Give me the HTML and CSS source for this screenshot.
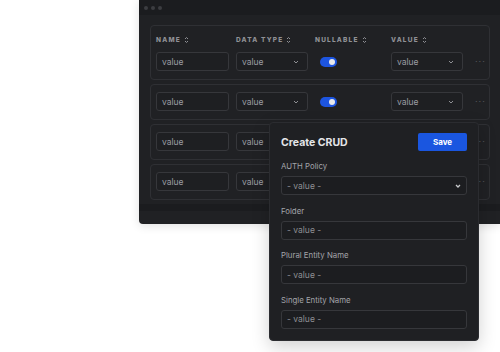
FILE: index.html
```html
<!DOCTYPE html>
<html lang="en">
<head>
  <meta charset="UTF-8">
  <meta name="viewport" content="width=device-width, initial-scale=1.0">
  <title>Create CRUD</title>
  <link rel="stylesheet" href="styles.css">
</head>
<body>
  <div class="window">
    <div class="titlebar">
      <span class="dot"></span><span class="dot"></span><span class="dot"></span>
    </div>

    <div class="window-body">
      <div class="card card-head">
        <div class="grid heads">
          <div class="th">NAME <svg class="sort" viewBox="0 0 5 8"><path d="M1 3l1.5-1.5L4 3M1 5l1.5 1.5L4 5"/></svg></div>
          <div class="th">DATA TYPE <svg class="sort" viewBox="0 0 5 8"><path d="M1 3l1.5-1.5L4 3M1 5l1.5 1.5L4 5"/></svg></div>
          <div class="th">NULLABLE <svg class="sort" viewBox="0 0 5 8"><path d="M1 3l1.5-1.5L4 3M1 5l1.5 1.5L4 5"/></svg></div>
          <div class="th">VALUE <svg class="sort" viewBox="0 0 5 8"><path d="M1 3l1.5-1.5L4 3M1 5l1.5 1.5L4 5"/></svg></div>
          <div></div>
        </div>
        <div class="grid">
          <div class="field">value</div>
          <div class="field select">value <svg class="chev" viewBox="0 0 6 4"><path d="M1 1l2 2 2-2"/></svg></div>
          <div class="cell"><span class="toggle"><span class="knob"></span></span></div>
          <div class="field select">value <svg class="chev" viewBox="0 0 6 4"><path d="M1 1l2 2 2-2"/></svg></div>
          <div class="more">&middot;&middot;&middot;</div>
        </div>
      </div>

      <div class="card">
        <div class="grid">
          <div class="field">value</div>
          <div class="field select">value <svg class="chev" viewBox="0 0 6 4"><path d="M1 1l2 2 2-2"/></svg></div>
          <div class="cell"><span class="toggle"><span class="knob"></span></span></div>
          <div class="field select">value <svg class="chev" viewBox="0 0 6 4"><path d="M1 1l2 2 2-2"/></svg></div>
          <div class="more">&middot;&middot;&middot;</div>
        </div>
      </div>

      <div class="card">
        <div class="grid">
          <div class="field">value</div>
          <div class="field select">value <svg class="chev" viewBox="0 0 6 4"><path d="M1 1l2 2 2-2"/></svg></div>
          <div class="cell"><span class="toggle"><span class="knob"></span></span></div>
          <div class="field select">value <svg class="chev" viewBox="0 0 6 4"><path d="M1 1l2 2 2-2"/></svg></div>
          <div class="more">&middot;&middot;&middot;</div>
        </div>
      </div>

      <div class="card">
        <div class="grid">
          <div class="field">value</div>
          <div class="field select">value <svg class="chev" viewBox="0 0 6 4"><path d="M1 1l2 2 2-2"/></svg></div>
          <div class="cell"><span class="toggle"><span class="knob"></span></span></div>
          <div class="field select">value <svg class="chev" viewBox="0 0 6 4"><path d="M1 1l2 2 2-2"/></svg></div>
          <div class="more">&middot;&middot;&middot;</div>
        </div>
      </div>

      <div class="footer-band"></div>
    </div>
  </div>

  <div class="modal">
    <div class="modal-head">
      <h2>Create CRUD</h2>
      <button class="btn-save">Save</button>
    </div>

    <label>AUTH Policy</label>
    <div class="input select">- value - <svg class="chev light" viewBox="0 0 6 4"><path d="M1 1l2 2 2-2"/></svg></div>

    <label>Folder</label>
    <div class="input">- value -</div>

    <label>Plural Entity Name</label>
    <div class="input">- value -</div>

    <label>Single Entity Name</label>
    <div class="input">- value -</div>
  </div>
</body>
</html>
```

FILE: styles.css
```css
body { margin: 0; background: #fff; font-family: "Inter", "Noto Sans", sans-serif; color: #9c9da2; width: 500px; height: 352px; overflow: hidden; position: relative; }

.window { margin-left: 139px; width: 361px; height: 224px; background: #202124; border-radius: 0 0 0 4px; box-shadow: 0 2px 10px rgba(0,0,0,0.12); overflow: hidden; }
.titlebar { height: 15px; background: #1b1c1f; display: flex; align-items: center; gap: 3px; padding-left: 5px; }
.dot { width: 4px; height: 4px; border-radius: 50%; background: #3c3d41; }

.window-body { padding: 10px 10px 0 11px; }
.card { border: 1px solid #2f3034; border-radius: 4px; padding: 7px 5px 8px; margin-bottom: 4px; }
.card-head { padding-top: 9px; padding-bottom: 8px; }

.grid { display: grid; grid-template-columns: 73px 72px 69px 72px 1fr; column-gap: 7px; align-items: center; }
.heads { height: 9px; margin-bottom: 8px; }
.th { font-size: 6.5px; font-weight: 800; letter-spacing: 1.2px; color: #909196; display: flex; align-items: center; gap: 3px; }
.sort { width: 5px; height: 8px; fill: none; stroke: #909196; stroke-width: 1; }

.field { height: 19px; box-sizing: border-box; border: 1px solid #36373b; border-radius: 3px; background: #1e1f22; font-size: 8.5px; color: #9c9da2; padding: 0 5px; display: flex; align-items: center; }
.select { justify-content: space-between; }
.chev { width: 6px; height: 4px; fill: none; stroke: #8e8f94; stroke-width: 1; margin-right: 3px; }
.chev.light { stroke: #c8c9cc; stroke-width: 1.3; margin-right: 0; }

.cell { display: flex; align-items: center; padding-left: 5px; }
.toggle { width: 17px; height: 10px; border-radius: 5px; background: #1d55e0; display: flex; align-items: center; justify-content: flex-end; padding-right: 2px; box-sizing: border-box; }
.knob { width: 6px; height: 6px; border-radius: 50%; background: #e8e9ec; }
.more { color: #55565b; font-size: 9px; letter-spacing: 1px; padding-left: 5px; }

.footer-band { height: 7px; background: #1b1c1f; margin: 3px -10px 0 -11px; }

.modal { position: absolute; left: 269px; top: 122px; width: 210px; height: 219px; box-sizing: border-box; background: #1f2023; border: 1px solid #2b2c30; border-radius: 4px; padding: 10px 11px 12px; box-shadow: 0 6px 18px rgba(0,0,0,0.18); display: flex; flex-direction: column; }
.modal-head { display: flex; justify-content: space-between; align-items: center; height: 19px; margin-bottom: 10px; }
.modal-head h2 { margin: 0; font-size: 10.5px; font-weight: 700; color: #e4e5e8; }
.btn-save { width: 49px; height: 18px; border: 0; border-radius: 2px; background: #1a56e0; color: #fff; font-family: inherit; font-size: 8px; font-weight: 700; padding: 0; }
.modal label { font-size: 7.8px; line-height: 10px; color: #a3a4a9; margin-bottom: 5px; }
.input { height: 19px; box-sizing: border-box; border: 1px solid #36373b; border-radius: 3px; background: #1c1d20; font-size: 8.5px; color: #8e8f94; padding: 0 5px; display: flex; align-items: center; margin-bottom: 10.5px; flex-shrink: 0; }
.input:last-child { margin-bottom: 0; }
```
